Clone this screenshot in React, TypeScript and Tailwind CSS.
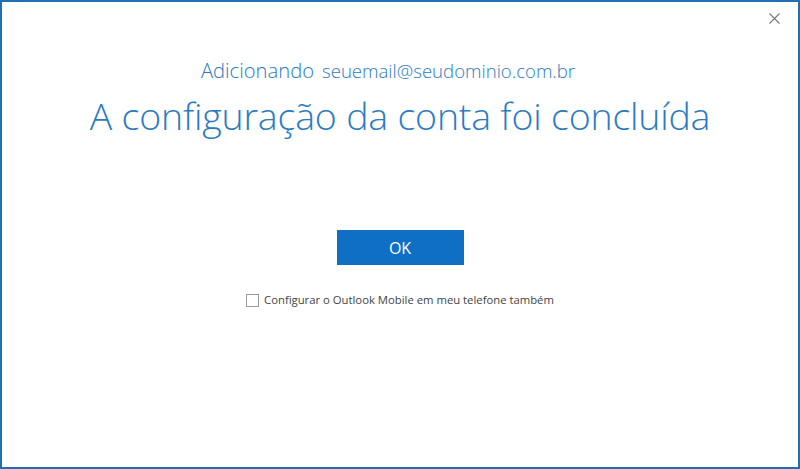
import { useState } from "react";

export default function App() {
  const [checked, setChecked] = useState(false);

  return (
    <div className="w-[800px] h-[469px] bg-white border-2 border-[#1f6fb2] flex flex-col font-['Open_Sans',sans-serif] overflow-hidden">
      <div className="flex justify-end pr-[16px] pt-[8px] h-[30px]">
        <button className="w-[16px] h-[16px] flex items-center justify-center text-[#777]">
          <svg width="11" height="11" viewBox="0 0 11 11" fill="none" stroke="currentColor" strokeWidth="1.1">
            <path d="M0.5 0.5 L10.5 10.5 M10.5 0.5 L0.5 10.5" />
          </svg>
        </button>
      </div>

      <div className="flex flex-col items-center">
        <div className="flex items-baseline gap-[8px] mt-[28px] mr-[24px] text-[#2b7bbf] leading-none">
          <span className="text-[20.2px] font-light">Adicionando</span>
          <span className="text-[18.6px] font-light">seuemail@seudominio.com.br</span>
        </div>
        <h1 className="mt-[16px] text-[37.5px] font-light text-[#2b7bbf] leading-none tracking-[-0.2px]">
          A configuração da conta foi concluída
        </h1>

        <button className="mt-[96px] w-[127px] h-[35px] bg-[#0f6fc4] text-white text-[16px] font-normal">
          OK
        </button>

        <label className="mt-[27px] flex items-center gap-[5px] text-[11.3px] text-[#444] cursor-pointer">
          <span
            onClick={() => setChecked(!checked)}
            className="w-[13px] h-[13px] border border-[#9a9a9a] bg-white flex items-center justify-center text-[10px] leading-none"
          >
            {checked ? "✓" : ""}
          </span>
          <span>Configurar o Outlook Mobile em meu telefone também</span>
        </label>
      </div>
    </div>
  );
}
